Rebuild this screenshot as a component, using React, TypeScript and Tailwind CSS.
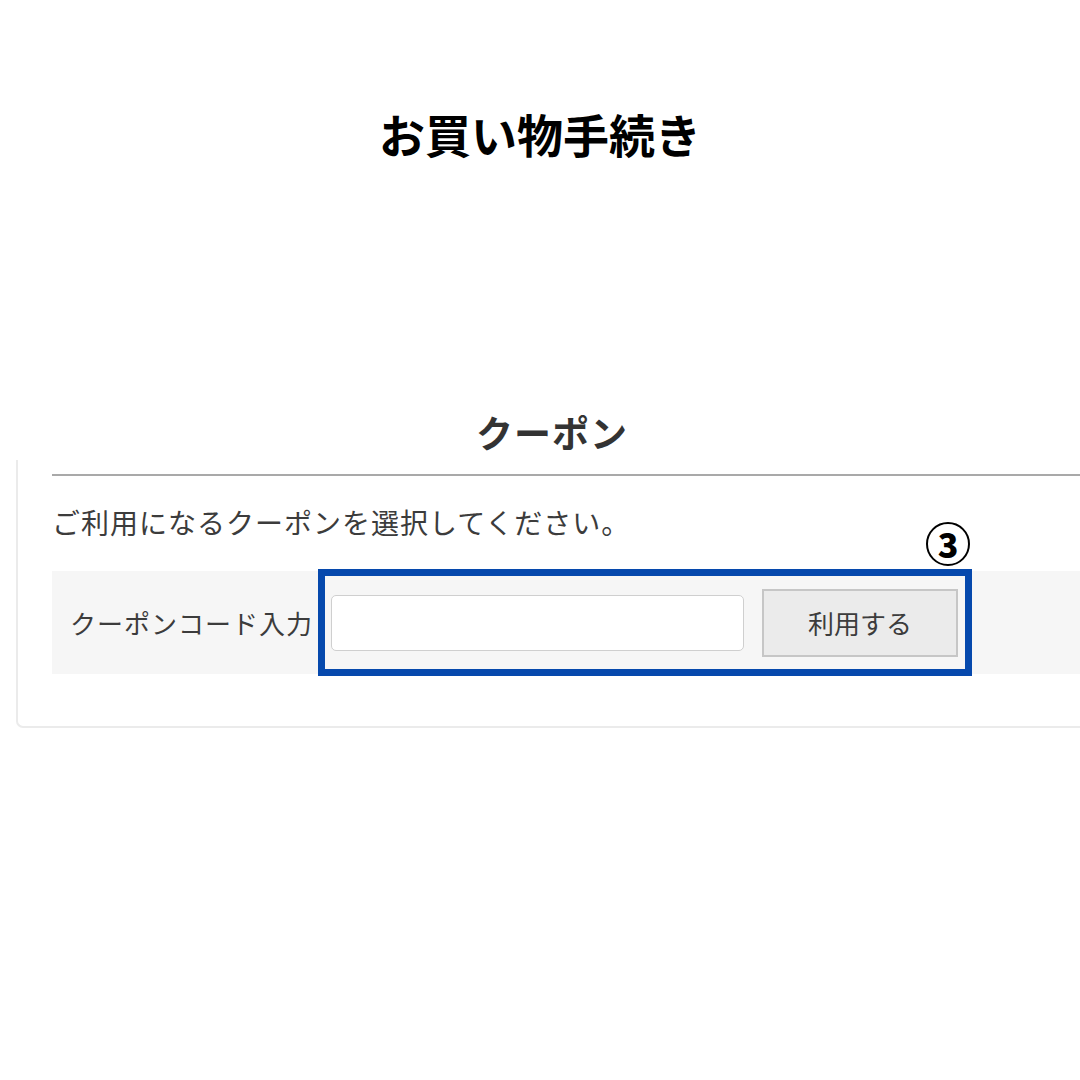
export default function App() {
    return (
        <div
            className="w-[1080px] h-[1080px] bg-white overflow-hidden"
            style={{ fontFamily: '"Noto Sans CJK JP", "Noto Sans", sans-serif' }}
        >
            {/* タイトル */}
            <h1 className="pt-[110px] text-center text-[46px] leading-[46px] font-bold text-black">
                お買い物手続き
            </h1>

            {/* クーポン見出し */}
            <h2 className="mt-[258px] pl-[24px] text-center text-[37px] leading-[36px] font-bold text-[#333] tracking-[1px]">
                クーポン
            </h2>

            {/* カード */}
            <div className="mt-[10px] ml-[16px] w-[1200px] border-l-2 border-b-2 border-[#ebebeb] rounded-bl-[7px] pl-[34px] pt-[14px] pb-[52px]">
                <div className="border-t-2 border-[#a9a9a9]" />

                <p className="mt-[32px] text-[28px] leading-[28px] text-[#3c3c3c] tracking-[1px]">
                    ご利用になるクーポンを選択してください。
                </p>

                <div className="mt-[35px] h-[103px] bg-[#f6f6f6] flex items-center">
                    <span className="w-[266px] pl-[18px] text-[26px] leading-[26px] text-[#3c3c3c] tracking-[1px] shrink-0">
                        クーポンコード入力
                    </span>

                    {/* 入力欄 + ボタン (枠で強調) */}
                    <div className="relative h-[107px] shrink-0 border-[7px] border-[#0649ad] flex items-center pl-[6px] pr-[7px] gap-[18px]">
                        <div className="w-[413px] h-[56px] bg-white border border-[#cfcfcf] rounded-[5px]" />
                        <button className="w-[196px] h-[68px] bg-[#ebebeb] border-2 border-[#c6c6c6] text-[26px] leading-[26px] text-[#3c3c3c] flex items-center justify-center">
                            利用する
                        </button>

                        <div className="absolute right-[-5px] bottom-full mb-[10px] w-[44px] h-[44px] rounded-full border-2 border-black flex items-center justify-center text-[34px] leading-[34px] font-extrabold text-black">
                            3
                        </div>
                    </div>
                </div>
            </div>
        </div>
    );
}
